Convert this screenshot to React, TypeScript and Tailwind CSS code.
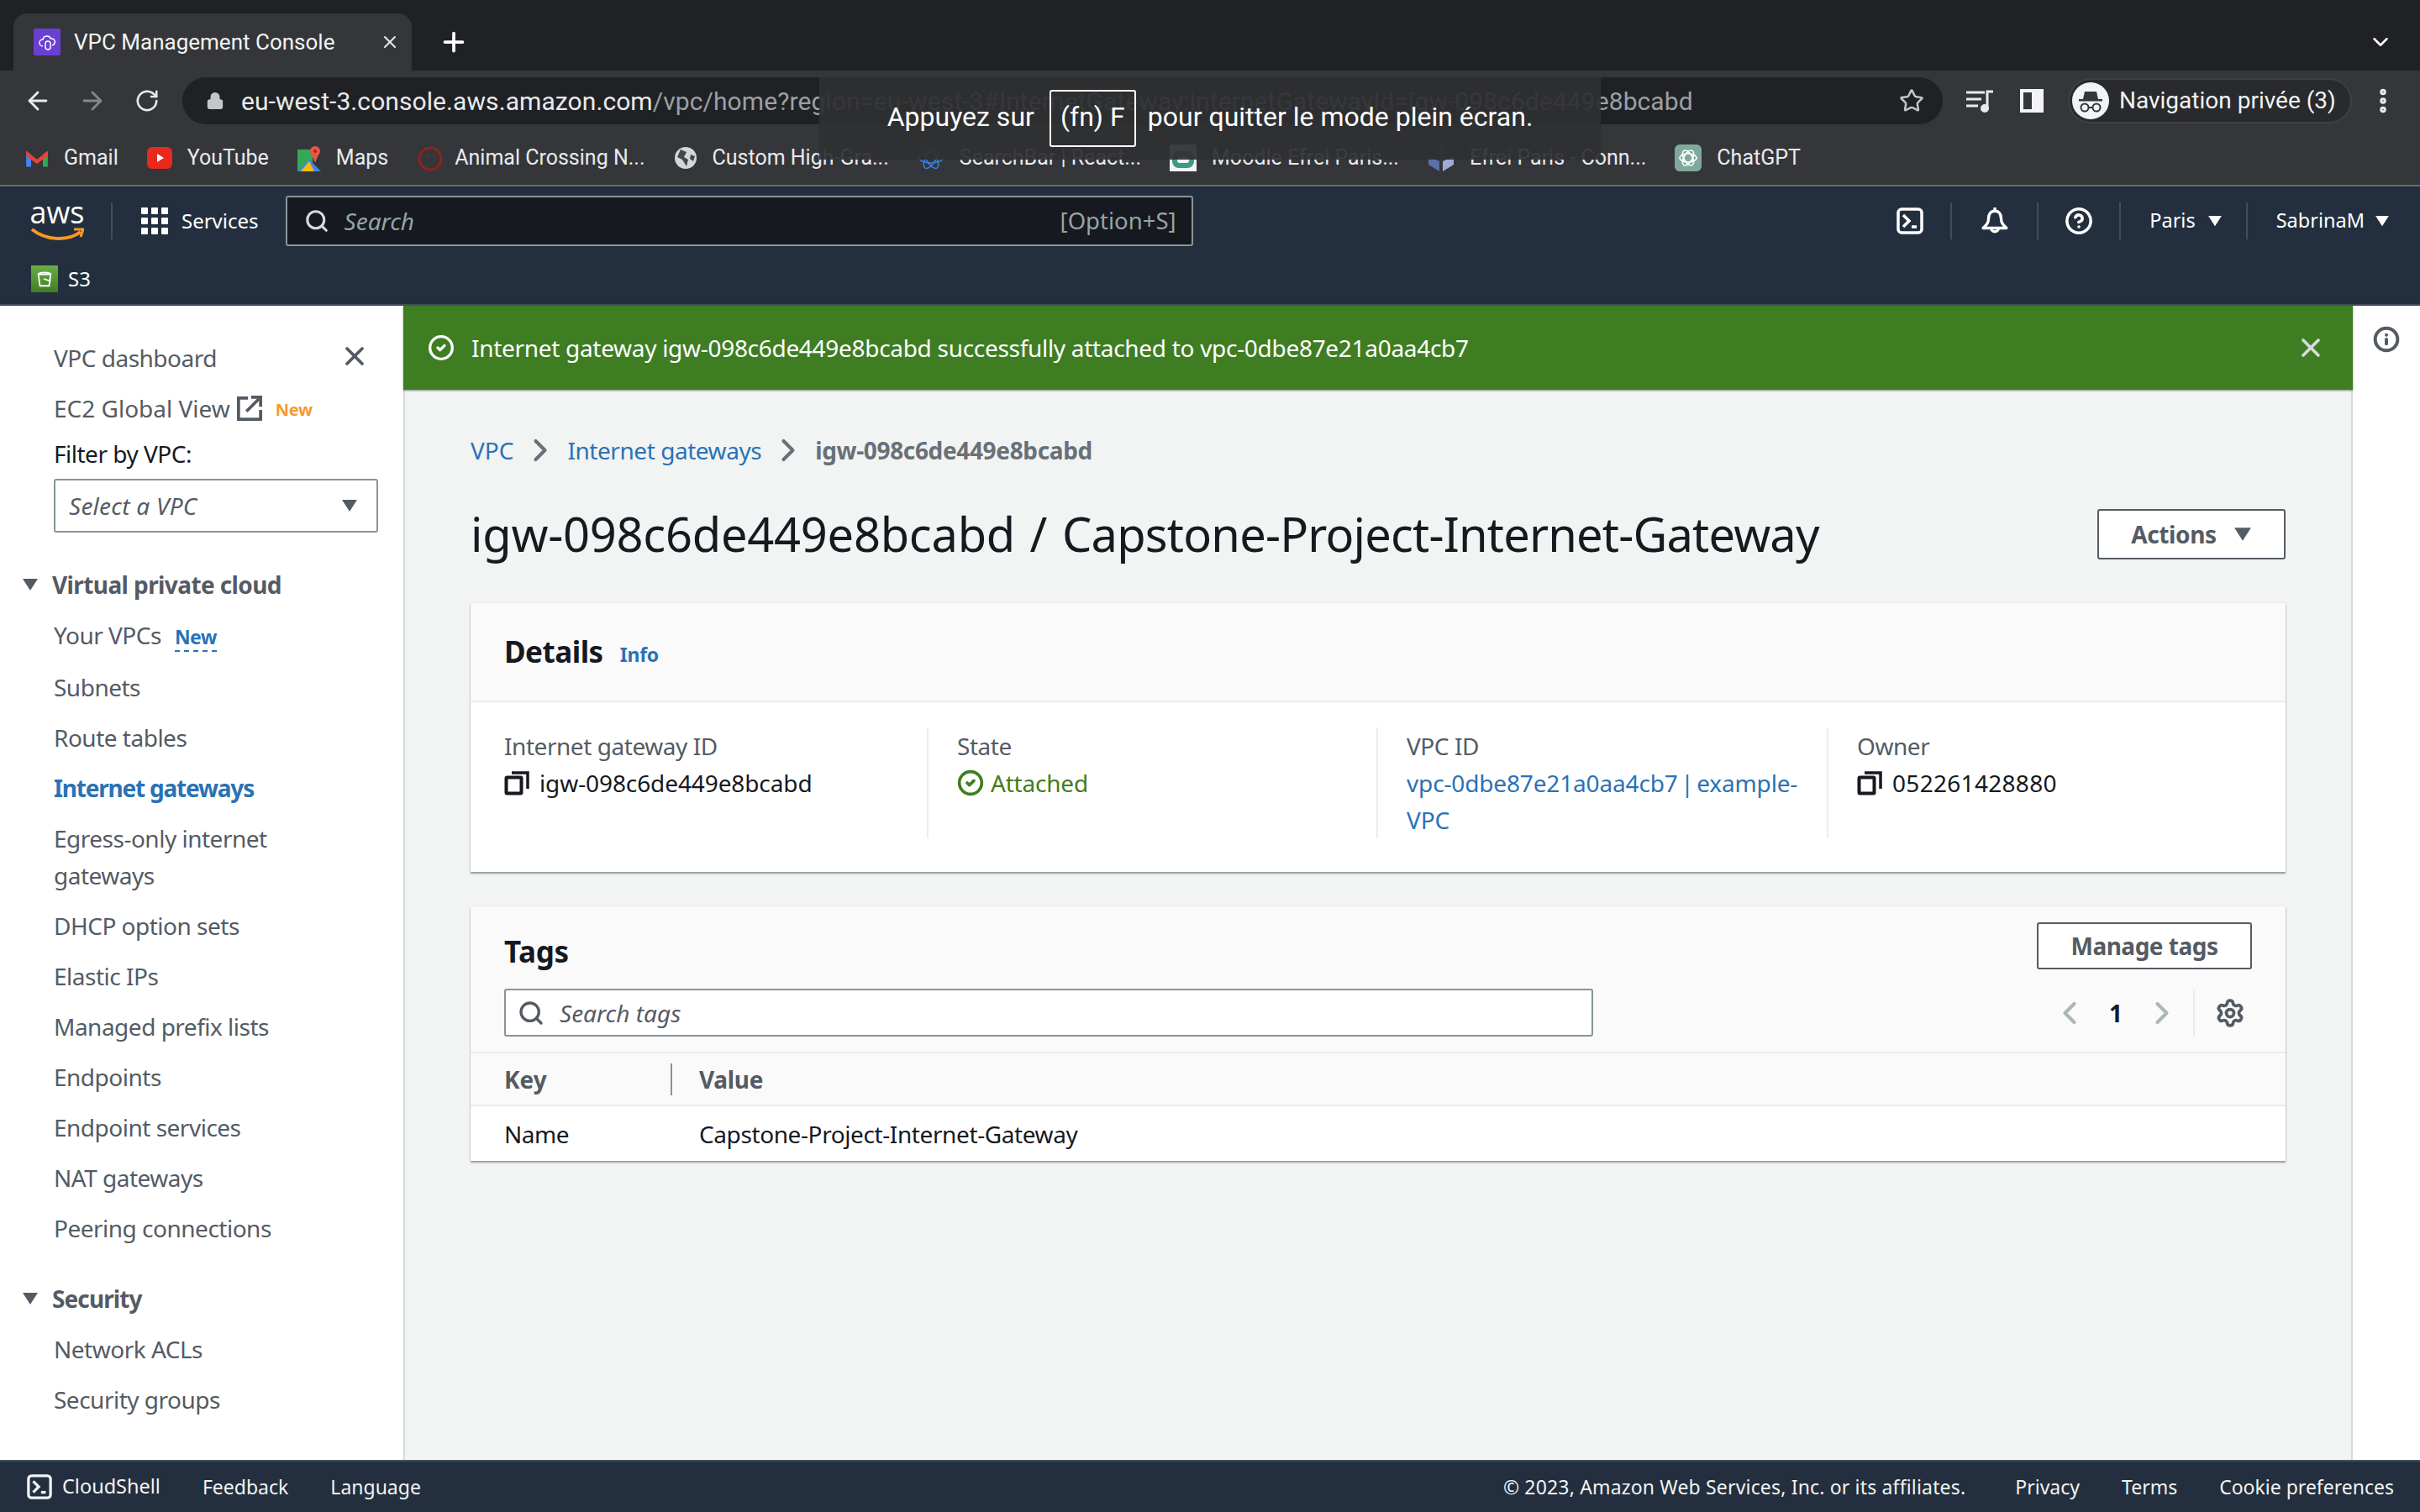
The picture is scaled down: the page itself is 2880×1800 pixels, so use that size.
import React from 'react';
import { ArrowLeft, ArrowRight, RotateCw, Lock, Star, X, Plus, ChevronDown, ChevronLeft, ChevronRight, Search, Settings, EllipsisVertical, CircleHelp, CircleCheck, Info } from 'lucide-react';

const navTop = ['Your VPCs', 'Subnets', 'Route tables', 'Internet gateways', 'Egress-only internet gateways', 'DHCP option sets', 'Elastic IPs', 'Managed prefix lists', 'Endpoints', 'Endpoint services', 'NAT gateways', 'Peering connections'];
const navSecurity = ['Network ACLs', 'Security groups'];

function Tri({ className }: { className: string }) {
  return (
    <svg viewBox="0 0 20 16" className={className} fill="currentColor">
      <path d="M1 1h18L10 15z" />
    </svg>
  );
}

function Terminal({ className }: { className: string }) {
  return (
    <svg viewBox="0 0 32 32" className={className} fill="none" stroke="currentColor" strokeWidth="3.5">
      <rect x="2" y="2" width="28" height="28" rx="4" />
      <path d="M8 9l7 7-7 7" />
      <path d="M18 23h6" />
    </svg>
  );
}

function BellIcon({ className }: { className: string }) {
  return (
    <svg viewBox="0 0 32 32" className={className} fill="none" stroke="currentColor" strokeWidth="3.2" strokeLinejoin="round">
      <path d="M16 1v4" />
      <path d="M16 5c-5 0-7 4-7 8 0 5-2 7-6 11h26c-4-4-6-6-6-11 0-4-2-8-7-8z" />
      <path d="M12 24a4 4 0 0 0 8 0" />
    </svg>
  );
}

function CopyIcon() {
  return (
    <svg viewBox="0 0 30 30" className="w-[30px] h-[30px] shrink-0" fill="none" stroke="#16191f">
      <rect x="2.5" y="8.5" width="18" height="19" rx="1" strokeWidth="4" />
      <path d="M9 3h19v19" strokeWidth="3.5" />
    </svg>
  );
}

function OpenLink() {
  return (
    <svg viewBox="0 0 32 32" className="ml-[8px] w-[30px] h-[30px]" fill="none" stroke="#545b64" strokeWidth="4">
      <path d="M14 3H2v27h28V18" />
      <path d="M12 20L28 4" />
      <path d="M18 2h12v12" />
    </svg>
  );
}

function Gmail() {
  return (
    <svg viewBox="0 0 24 20" className="w-[28px] h-[24px]">
      <path d="M1 19V3l5 3.5V19z" fill="#4285f4" />
      <path d="M23 19V3l-5 3.5V19z" fill="#34a853" />
      <path d="M1 3l11 8.5L23 3v5l-11 8L1 8z" fill="#ea4335" />
    </svg>
  );
}

function Youtube() {
  return (
    <svg viewBox="0 0 30 30" className="w-[30px] h-[30px]">
      <rect x="0" y="2" width="30" height="26" rx="6" fill="#e8291c" />
      <path d="M12 10l8 5-8 5z" fill="#fff" />
    </svg>
  );
}

function Maps() {
  return (
    <svg viewBox="0 0 28 32" className="w-[28px] h-[32px]">
      <path d="M0 6h18v26H0z" fill="#34a853" />
      <path d="M0 32l14-14 14 14z" fill="#4285f4" />
      <path d="M4 32l10-12 6 12z" fill="#fbbc04" />
      <circle cx="21" cy="8" r="6" fill="#e8574a" />
      <path d="M16 10l5 12 5-12z" fill="#e8574a" />
      <circle cx="21" cy="8" r="2" fill="#a5261c" />
    </svg>
  );
}

function Animal() {
  return (
    <svg viewBox="0 0 32 32" className="w-[32px] h-[32px] -mr-[5px]" fill="none" stroke="#8c2320" strokeWidth="3">
      <circle cx="16" cy="17" r="13" />
      <circle cx="12" cy="13" r="1.5" fill="#8c2320" stroke="none" />
      <circle cx="20" cy="13" r="1.5" fill="#8c2320" stroke="none" />
    </svg>
  );
}

function Globe() {
  return (
    <svg viewBox="0 0 28 28" className="w-[28px] h-[28px]">
      <circle cx="14" cy="14" r="13" fill="#d5d6d8" />
      <path d="M8 4l7 3-3 6 5 3-2 8-5-8-6-3z" fill="#45464a" />
      <path d="M20 10l5 2-2 6-4-3z" fill="#45464a" />
    </svg>
  );
}

function ReactLogo() {
  return (
    <svg viewBox="0 0 32 32" className="w-[32px] h-[32px]" fill="none" stroke="#3b7dd8" strokeWidth="1.6">
      <ellipse cx="16" cy="16" rx="14" ry="6" />
      <ellipse cx="16" cy="16" rx="14" ry="6" transform="rotate(60 16 16)" />
      <ellipse cx="16" cy="16" rx="14" ry="6" transform="rotate(120 16 16)" />
    </svg>
  );
}

function Moodle() {
  return (
    <svg viewBox="0 0 32 32" className="w-[32px] h-[32px]">
      <rect width="32" height="32" fill="#f4f4f4" />
      <rect x="3" y="8" width="26" height="20" rx="8" fill="#3d9b88" />
      <rect x="9" y="15" width="14" height="7" rx="3" fill="#f4f4f4" />
    </svg>
  );
}

function Efrei() {
  return (
    <svg viewBox="0 0 32 32" className="w-[32px] h-[32px]">
      <path d="M16 1l7 8-7 6-7-6z" fill="#3f5f9a" />
      <path d="M1 14l13 6v12L1 24z" fill="#5d6fa8" />
      <path d="M31 14l-13 6v12l13-8z" fill="#a3a9d6" />
    </svg>
  );
}

function ChatGpt() {
  return (
    <svg viewBox="0 0 32 32" className="w-[32px] h-[32px]" fill="none">
      <rect width="32" height="32" rx="6" fill="#7fa99b" />
      <g stroke="#fff" strokeWidth="1.6">
        <ellipse cx="16" cy="16" rx="10" ry="5" />
        <ellipse cx="16" cy="16" rx="10" ry="5" transform="rotate(60 16 16)" />
        <ellipse cx="16" cy="16" rx="10" ry="5" transform="rotate(120 16 16)" />
      </g>
    </svg>
  );
}

function Incognito() {
  return (
    <svg viewBox="0 0 44 44" className="w-[44px] h-[44px]">
      <circle cx="22" cy="22" r="22" fill="#f1f3f4" />
      <path d="M15 11h14l2 9H13z" fill="#35363a" />
      <rect x="8" y="20" width="28" height="2.5" fill="#35363a" />
      <g fill="none" stroke="#35363a" strokeWidth="2">
        <circle cx="15" cy="30" r="4.5" />
        <circle cx="29" cy="30" r="4.5" />
        <path d="M19.5 30h5" />
      </g>
    </svg>
  );
}

function Bookmark({ icon, label }: { icon: React.ReactNode; label: string }) {
  return (
    <div className="flex items-center gap-[18px]">
      {icon}
      <span className="text-[25px] text-[#e8eaed] whitespace-nowrap">{label}</span>
    </div>
  );
}

function BrowserChrome() {
  return (
    <div className="font-['Roboto',sans-serif]">
      <div className="h-[84px] bg-[#202124] flex items-end pl-[16px] pr-[32px]">
        <div className="w-[474px] h-[68px] bg-[#35363a] rounded-t-[16px] flex items-center pl-[24px] pr-[14px]">
          <div className="w-[32px] h-[32px] bg-[#6b3fd4] rounded-[2px] flex items-center justify-center">
            <svg viewBox="0 0 24 24" className="w-[24px] h-[24px]" fill="none" stroke="#fff" strokeWidth="1.5">
              <path d="M7 17a4 4 0 0 1 0-8 5 5 0 0 1 9.5-1A4 4 0 0 1 18 16" />
              <rect x="10" y="11" width="6" height="10" rx="3" />
            </svg>
          </div>
          <span className="ml-[16px] text-[26px] text-[#f1f3f4] whitespace-nowrap">VPC Management Console</span>
          <X className="ml-auto w-[24px] h-[24px] text-[#e8eaed]" />
        </div>
        <div className="h-[68px] flex items-center ml-[32px]">
          <Plus className="w-[36px] h-[36px] text-white" strokeWidth={2.5} />
        </div>
        <div className="ml-auto h-[68px] flex items-center">
          <ChevronDown className="w-[30px] h-[30px] text-white" />
        </div>
      </div>

      <div className="h-[72px] py-[8px] bg-[#35363a] flex items-center pl-[28px]">
        <ArrowLeft className="w-[34px] h-[34px] text-[#e8eaed]" />
        <ArrowRight className="w-[34px] h-[34px] ml-[31px] text-[#85878b]" />
        <RotateCw className="w-[30px] h-[30px] ml-[33px] text-[#e8eaed]" />
        <div className="ml-[27px] w-[2095px] h-[56px] bg-[#202124] rounded-full flex items-center pl-[28px] pr-[22px]">
          <Lock className="w-[22px] h-[22px] text-[#c4c6c9]" fill="#c4c6c9" />
          <span className="ml-[20px] text-[30px] tracking-[0.08px] text-[#e8eaed] whitespace-nowrap">
            eu-west-3.console.aws.amazon.com
            <span className="text-[#9aa0a6]">/vpc/home?region=eu-west-3#InternetGateway:internetGatewayId=igw-098c6de449e8bcabd</span>
          </span>
          <Star className="ml-auto w-[30px] h-[30px] text-[#c4c6c9]" />
        </div>
        <svg viewBox="0 0 34 28" className="ml-[27px] w-[34px] h-[28px]" fill="none" stroke="#e8eaed" strokeWidth="3">
          <path d="M1 4h22M1 12h18M1 20h14" />
          <path d="M26 24V3h7" />
          <circle cx="23" cy="23" r="3.5" fill="#e8eaed" />
        </svg>
        <div className="ml-[31px] w-[28px] h-[28px] border-[4px] border-[#f1f3f4] border-r-[14px]" />
        <div className="ml-[29px] w-[338px] h-[54px] bg-[#292a2d] border-2 border-[#3f4044] rounded-full flex items-center pl-[3px]">
          <Incognito />
          <span className="ml-[12px] text-[28px] text-[#f1f3f4] whitespace-nowrap">Navigation privée (3)</span>
        </div>
        <EllipsisVertical className="ml-[19px] w-[36px] h-[36px] text-[#e8eaed]" strokeWidth={3} />
      </div>

      <div className="h-[66px] bg-[#35363a] border-b-2 border-[#6a6b6e] flex items-center pl-[30px] gap-[34px]">
        <Bookmark icon={<Gmail />} label="Gmail" />
        <Bookmark icon={<Youtube />} label="YouTube" />
        <Bookmark icon={<Maps />} label="Maps" />
        <Bookmark icon={<Animal />} label="Animal Crossing N..." />
        <Bookmark icon={<Globe />} label="Custom High-Gra..." />
        <Bookmark icon={<ReactLogo />} label="SearchBar | React..." />
        <Bookmark icon={<Moodle />} label="Moodle Efrei Paris..." />
        <Bookmark icon={<Efrei />} label="Efrei Paris - Conn..." />
        <Bookmark icon={<ChatGpt />} label="ChatGPT" />
      </div>
    </div>
  );
}

function AwsHeader() {
  return (
    <div className="h-[142px] bg-[#232f3e] border-b-2 border-[#414d5c] text-white">
      <div className="h-[82px] flex items-center pl-[36px]">
        <div className="w-[64px] flex flex-col items-center">
          <span className="text-[36px] leading-[34px] font-['Open_Sans',sans-serif]">aws</span>
          <svg viewBox="0 0 64 20" className="w-[64px] h-[20px]" fill="none">
            <path d="M2 3c16 13 42 15 58 3" stroke="#f79a25" strokeWidth="4" />
            <path d="M52 3l11 0-3 9" stroke="#f79a25" strokeWidth="3" />
          </svg>
        </div>
        <div className="ml-[32px] w-[2px] h-[44px] bg-[#414d5c]" />
        <div className="ml-[34px] grid grid-cols-3 gap-[4px]">
          {Array.from({ length: 9 }).map((_, i) => (
            <div key={i} className="w-[8px] h-[8px] bg-white rounded-[1px]" />
          ))}
        </div>
        <span className="ml-[16px] text-[24px]">Services</span>
        <div className="ml-[32px] w-[1080px] h-[60px] bg-[#16191f] border-2 border-[#879596] rounded-[3px] flex items-center pl-[20px] pr-[18px]">
          <Search className="w-[30px] h-[30px] text-[#d5dbdb]" strokeWidth={2.5} />
          <span className="ml-[18px] text-[28px] italic text-[#95a5a6]">Search</span>
          <span className="ml-auto text-[27.5px] text-[#95a5a6]">[Option+S]</span>
        </div>
        <div className="ml-auto flex items-center">
          <Terminal className="w-[32px] h-[32px]" />
          <div className="ml-[32px] w-[2px] h-[44px] bg-[#414d5c]" />
          <BellIcon className="ml-[34px] w-[34px] h-[34px]" />
          <div className="ml-[33px] w-[2px] h-[44px] bg-[#414d5c]" />
          <CircleHelp className="ml-[31px] w-[34px] h-[34px]" strokeWidth={2.5} />
          <div className="ml-[31px] w-[2px] h-[44px] bg-[#414d5c]" />
          <span className="ml-[34px] text-[23.5px]">Paris</span>
          <Tri className="ml-[14px] w-[18px] h-[14px]" />
          <div className="ml-[28px] w-[2px] h-[44px] bg-[#414d5c]" />
          <span className="ml-[34px] text-[23.5px]">SabrinaM</span>
          <Tri className="ml-[12px] w-[18px] h-[14px] mr-[36px]" />
        </div>
      </div>
      <div className="mt-[10px] flex items-center pl-[37px] h-[36px]">
        <div className="w-[32px] h-[32px] bg-linear-to-t from-[#3f7d23] to-[#6aae45] flex items-center justify-center">
          <svg viewBox="0 0 24 24" className="w-[22px] h-[22px]" fill="none" stroke="#fff" strokeWidth="2">
            <path d="M4 6h16l-2 15H6z" />
            <path d="M4 6c2-3 14-3 16 0" />
            <path d="M11 12l9 3" />
          </svg>
        </div>
        <span className="ml-[12px] text-[24px]">S3</span>
      </div>
    </div>
  );
}

function Sidebar() {
  return (
    <div className="w-[480px] shrink-0 bg-white text-[28px] leading-[44px] tracking-[-0.5px] text-[#545b64] pt-[40px] relative">
      <X className="absolute left-[404px] top-[42px] w-[36px] h-[36px] text-[#545b64]" strokeWidth={2.5} />
      <div className="pl-[64px]">
        <div className="h-[44px]">VPC dashboard</div>
        <div className="h-[44px] mt-[16px] flex items-center">
          <span className="tracking-normal">EC2 Global View</span>
          <OpenLink />
          <span className="ml-[16px] mt-[4px] text-[20px] font-bold tracking-[-0.3px] text-[#f59a2f]">New</span>
        </div>
        <div className="h-[44px] mt-[10px] text-[#16191f]">Filter by VPC:</div>
        <div className="mt-[8px] w-[386px] h-[64px] border-2 border-[#879596] rounded-[3px] flex items-center pl-[16px] pr-[22px] italic tracking-[0.25px]">
          <span>Select a VPC</span>
          <Tri className="ml-auto w-[20px] h-[16px]" />
        </div>
      </div>
      <div className="mt-[40px] pl-[26px] flex items-center h-[44px] font-bold tracking-[-0.6px]">
        <Tri className="w-[20px] h-[16px]" />
        <span className="ml-[16px]">Virtual private cloud</span>
      </div>
      <div className="pl-[64px] pr-[40px] mt-[8px]">
        {navTop.map((item) => (
          <div key={item} className="py-[8px]">
            {item === 'Internet gateways' ? (
              <span className="font-bold tracking-[-1.2px] text-[#2a72b5]">{item}</span>
            ) : (
              <span>{item}</span>
            )}
            {item === 'Your VPCs' && (
              <span className="ml-[16px] text-[23px] font-bold text-[#2a72b5] border-b-2 border-dashed border-[#2a72b5]">New</span>
            )}
          </div>
        ))}
      </div>
      <div className="mt-[32px] pl-[26px] flex items-center h-[44px] font-bold tracking-[-0.9px]">
        <Tri className="w-[20px] h-[16px]" />
        <span className="ml-[16px]">Security</span>
      </div>
      <div className="pl-[64px] mt-[8px]">
        {navSecurity.map((item) => (
          <div key={item} className="py-[8px]">{item}</div>
        ))}
      </div>
    </div>
  );
}

function DetailColumn({ label, children, last }: { label: string; children: React.ReactNode; last?: boolean }) {
  return (
    <div className={last ? 'pl-[34px]' : 'pl-[34px] pr-[10px] border-r-2 border-[#eaeded] first:pl-0'}>
      <div className="text-[#545b64] tracking-[-0.45px]">{label}</div>
      {children}
    </div>
  );
}

function MainContent() {
  return (
    <div className="flex-1 flex flex-col min-w-0">
      <div className="h-[100px] bg-[#3f7d23] flex items-center pl-[29px] pr-[32px] text-white shrink-0 shadow-[0_1px_2px_rgba(0,28,36,0.5)] relative">
        <CircleCheck className="w-[32px] h-[32px]" strokeWidth={2.5} />
        <span className="ml-[20px] tracking-[-0.3px]">Internet gateway igw-098c6de449e8bcabd successfully attached to vpc-0dbe87e21a0aa4cb7</span>
        <X className="ml-auto w-[36px] h-[36px] text-[#d5dbdb]" strokeWidth={2.5} />
      </div>
      <div className="flex-1 bg-[#f2f3f3] border-x-2 border-[#d5dbdb] pl-[78px] pr-[78px] pt-[50px]">
        <div className="flex items-center h-[44px]">
          <span className="text-[#2a72b5]">VPC</span>
          <ChevronRight className="mx-[10px] w-[44px] h-[44px] text-[#687078]" strokeWidth={2.25} />
          <span className="text-[#2a72b5] tracking-[-0.45px]">Internet gateways</span>
          <ChevronRight className="mx-[10px] w-[44px] h-[44px] text-[#687078]" strokeWidth={2.25} />
          <span className="font-bold text-[#687078] tracking-[-0.35px]">igw-098c6de449e8bcabd</span>
        </div>
        <div className="mt-[40px] flex items-center justify-between h-[76px]">
          <div className="-mt-[2px] text-[56px] leading-[72px] text-[#16191f] whitespace-nowrap">
            <span className="tracking-[-0.25px]">igw-098c6de449e8bcabd</span>
            <span className="mx-[3px]"> / </span>
            <span className="tracking-[-0.8px]">Capstone-Project-Internet-Gateway</span>
          </div>
          <div className="w-[224px] h-[60px] bg-white border-2 border-[#545b64] rounded-[3px] flex items-center justify-center font-bold text-[#545b64]">
            <span className="tracking-[-0.4px]">Actions</span>
            <Tri className="ml-[20px] w-[22px] h-[18px]" />
          </div>
        </div>

        <div className="mt-[44px] bg-white shadow-[0_2px_2px_rgba(0,28,36,0.4),0_0_1px_rgba(0,28,36,0.2)]">
          <div className="h-[118px] bg-[#fafafa] border-b-2 border-[#eaeded] flex items-center pl-[40px]">
            <span className="text-[35px] font-bold tracking-[-0.5px] text-[#16191f]">Details</span>
            <span className="ml-[20px] mt-[6px] text-[23px] font-bold tracking-[-0.2px] text-[#2a72b5]">Info</span>
          </div>
          <div className="h-[202px] px-[40px] pt-[30px]">
            <div className="grid grid-cols-[505px_535px_536px_1fr] h-[132px]">
              <DetailColumn label="Internet gateway ID">
                <div className="flex items-center text-[#16191f]">
                  <CopyIcon />
                  <span className="ml-[12px] tracking-[-0.1px]">igw-098c6de449e8bcabd</span>
                </div>
              </DetailColumn>
              <DetailColumn label="State">
                <div className="flex items-center text-[#3f7d23]">
                  <CircleCheck className="w-[32px] h-[32px]" strokeWidth={2.75} />
                  <span className="ml-[8px] tracking-[-0.2px]">Attached</span>
                </div>
              </DetailColumn>
              <DetailColumn label="VPC ID">
                <div className="text-[#2a72b5] tracking-[-0.15px] [word-spacing:-3.5px]">vpc-0dbe87e21a0aa4cb7 | example-VPC</div>
              </DetailColumn>
              <DetailColumn label="Owner" last>
                <div className="flex items-center text-[#16191f]">
                  <CopyIcon />
                  <span className="ml-[12px] tracking-[0.3px]">052261428880</span>
                </div>
              </DetailColumn>
            </div>
          </div>
        </div>

        <div className="mt-[41px] bg-white shadow-[0_2px_2px_rgba(0,28,36,0.4),0_0_1px_rgba(0,28,36,0.2)]">
          <div className="h-[175px] bg-[#fafafa] border-b-2 border-[#eaeded] px-[40px] pt-[19px]">
            <div className="flex items-center justify-between h-[56px]">
              <span className="mt-[14px] text-[35px] font-bold tracking-[-0.3px] text-[#16191f]">Tags</span>
              <div className="w-[256px] h-[56px] bg-white border-2 border-[#545b64] rounded-[3px] flex items-center justify-center font-bold tracking-[-0.5px] text-[#545b64]">Manage tags</div>
            </div>
            <div className="mt-[23px] flex items-center">
              <div className="w-[1296px] h-[57px] bg-white border-2 border-[#879596] rounded-[3px] flex items-center pl-[14px] italic text-[#545b64]">
                <Search className="w-[32px] h-[32px]" strokeWidth={2.5} />
                <span className="ml-[18px]">Search tags</span>
              </div>
              <div className="ml-auto flex items-center">
                <ChevronLeft className="w-[44px] h-[44px] text-[#aab7b8]" strokeWidth={2.25} />
                <span className="mx-[25px] font-bold text-[#16191f]">1</span>
                <ChevronRight className="w-[44px] h-[44px] text-[#aab7b8]" strokeWidth={2.25} />
                <div className="ml-[15px] w-[2px] h-[56px] bg-[#eaeded]" />
                <Settings className="ml-[24px] mr-[8px] w-[36px] h-[36px] text-[#545b64]" strokeWidth={2.5} />
              </div>
            </div>
          </div>
          <div className="h-[63px] bg-[#fafafa] border-b-2 border-[#eaeded] flex items-center pl-[40px] font-bold text-[#545b64]">
            <span className="w-[198px]">Key</span>
            <div className="w-[2px] h-[38px] bg-[#879596]" />
            <span className="ml-[32px] tracking-[-0.3px]">Value</span>
          </div>
          <div className="h-[65px] flex items-center pl-[40px] text-[#16191f]">
            <span className="w-[232px] tracking-[-0.5px]">Name</span>
            <span className="tracking-[-0.4px]">Capstone-Project-Internet-Gateway</span>
          </div>
        </div>
      </div>
    </div>
  );
}

function Footer() {
  return (
    <div className="h-[62px] bg-[#232f3e] border-t-2 border-[#414d5c] flex items-center pl-[32px] pr-[31px] text-[23px] text-[#f2f3f3]">
      <Terminal className="w-[30px] h-[30px]" />
      <span className="ml-[12px] text-[23.5px]">CloudShell</span>
      <span className="ml-[50px]">Feedback</span>
      <span className="ml-[50px]">Language</span>
      <span className="ml-auto tracking-[0.17px]">© 2023, Amazon Web Services, Inc. or its affiliates.</span>
      <span className="ml-[59px]">Privacy</span>
      <span className="ml-[50px]">Terms</span>
      <span className="ml-[50px]">Cookie preferences</span>
    </div>
  );
}

export default function App() {
  return (
    <div className="w-[2880px] h-[1800px] flex flex-col overflow-hidden relative font-['Noto_Sans',sans-serif]">
      <BrowserChrome />
      <AwsHeader />
      <div className="flex-1 flex min-h-0 overflow-hidden text-[28px] leading-[44px]">
        <Sidebar />
        <MainContent />
        <div className="w-[80px] shrink-0 bg-white flex justify-center pt-[24px]">
          <Info className="w-[32px] h-[32px] text-[#545b64]" strokeWidth={3} />
        </div>
      </div>
      <Footer />

      {/* fullscreen hint, sits over the browser toolbar */}
      <div className="absolute left-[975px] top-[92px] w-[930px] h-[98px] bg-[#2e2f32]/[0.93] flex items-center justify-center font-['Roboto',sans-serif] text-[32px] text-white">
        <span className="mb-[4px] mr-[4px]">Appuyez sur</span>
        <span className="mx-[14px] w-[103px] h-[68px] border-2 border-white rounded-[3px] flex items-center justify-center pb-[4px]">(fn) F</span>
        <span className="mb-[4px]">pour quitter le mode plein écran.</span>
      </div>
    </div>
  );
}
